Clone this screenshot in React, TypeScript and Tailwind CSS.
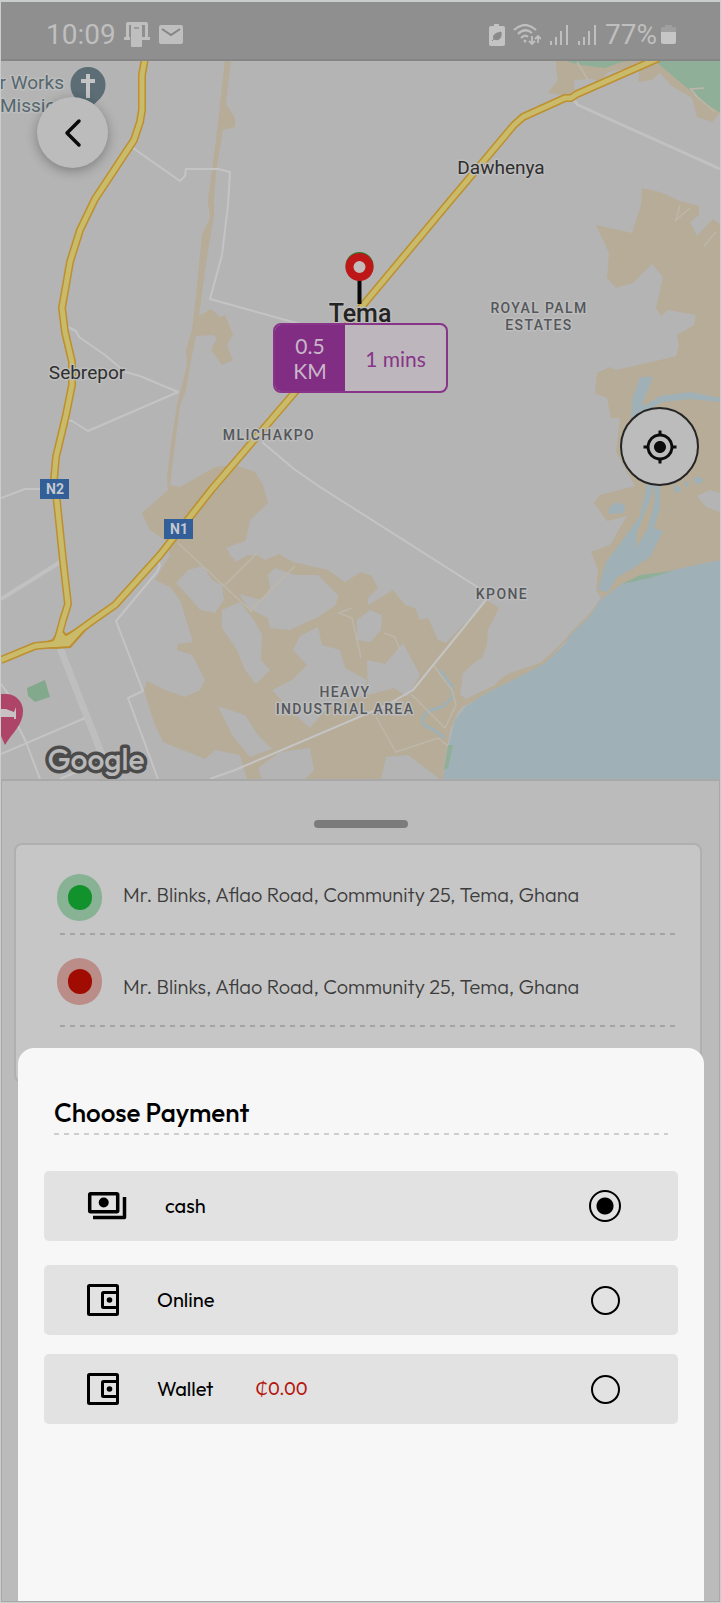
import { useState } from "react";
import type { ReactNode } from "react";
import { MdMyLocation } from "react-icons/md";

const N2 =
  "M145 58 L142 75 V110 L140 122 L134 140 L95 199 L80 230 L70 262 L62 308 L65 332 L72 362 V385 L66 415 L56 457 L54 480 L57 502 L63 560 L68 604 L63 620 L57 642";
const N1 =
  "M659 58 L577 94 L571 98 H565 L523 117 L514 125 L450 201 L364 304 L295 392 L212 489 L160 555 L115 605 L95 619 L66 640 L56 644 L35 646 L1 660";

function MapDrawing() {
  return (
    <svg
      className="block h-full w-full"
      viewBox="1 61 719 718"
      preserveAspectRatio="xMidYMid slice"
      role="img"
      aria-label="Map of Tema"
    >
      <rect x="1" y="61" width="719" height="718" fill="#b4b4b4" />

      <g fill="#b6ac98">
        <path d="M225 60H231L226 104 235 118V127L223 130 216 172 214 200V215L205 270 199 316 211 309 220 317 225 315 233 335 227 345 233 360 222 365 211 350 217 338 213 335 196 336 190 365 186 390 180 405 175 445 170 485 180 487 215 467 235 465 255 472 263 485 268 503 250 520 246 540 228 550 230 556 257 555 265 560 279 554 293 562 328 570 345 582 361 572 372 576 378 588 368 598V605L393 590 405 605 415 608 420 620 428 618 438 640 446 643 487 600 499 608 488 630 487 645 482 658 475 662 463 673 460 695 468 700 458 712 450 730 445 760 443 779H247L240 755 215 750 205 759 163 742 155 725 150 710 144 690 147 681 165 690 185 697 200 690 205 680 192 655 177 650 178 644 193 642 180 600 170 587 155 580 170 555 165 540 150 530 142 513 168 490 167 478 170 450 177 405 187 365 186 350 192 330 196 296 202 235 210 218 208 200 216 140Z" />
        <path d="M642 188L660 192 680 201 699 206V215L690 222 697 236 713 219 721 225V566L640 585 605 597 590 620 570 637 545 664 515 681 490 693 460 708 468 698 495 685 500 679 510 673 540 663 560 645 570 633 590 613 601 598 596 590 598 570 591 552 610 545 627 516 607 521 594 503 600 495 635 486 616 452 620 418 611 418 607 398 595 393 597 373 610 367 616 370 660 360 676 356 679 345 677 335 694 325 696 315 668 310 661 316 656 308 663 277 652 264 633 283 616 288 607 278 609 253 596 225 632 233 641 205Z" />
        <path d="M541 61H555L558 80 548 93 575 97 574 80 592 79 600 82 608 72 640 66 638 82 652 80 660 73 672 86 692 98 697 117 712 122 721 112V61Z" />
      </g>

      <g fill="#b4b4b4">
        <path d="M176 583L188 570 203 566 212 580 222 585 224 600 215 613 200 610 190 598Z" />
        <path d="M222 610L240 602 254 620 262 635 261 660 270 670 256 684 245 670 237 650 222 628Z" />
        <path d="M268 575L275 568 295 575 318 575 338 595 336 605 318 617 290 630 270 628 268 618 248 608 239 594 262 600 270 588Z" />
        <path d="M226 548L238 543 246 545V556L236 562Z" />
        <path d="M293 650L300 636 318 627 322 645 340 650 345 668 367 680 362 696 330 705 310 728 290 710 272 690 292 680 307 665Z" />
        <path d="M367 660L385 664 403 643 420 675 407 697 394 688 368 695Z" />
        <path d="M357 620L370 610 382 615 381 630 370 642 357 640Z" />
        <path d="M218 706L245 715 258 735 272 749 250 757 232 735Z" />
        <path d="M262 779L258 768 280 752 310 748 314 770 305 779Z" />
        <path d="M381 779L386 757 408 755 440 779Z" />
        <path d="M697 496L710 490 720 493V512L706 507Z" />
        <path d="M541 60H556V82L541 90Z" />
      </g>

      <g fill="#8faf99">
        <path d="M562 60L580 65 605 68 622 62 640 60Z" />
        <path d="M654 60L675 78 690 90 700 100 721 113V60Z" />
        <path d="M27 688L45 680 50 697 35 702 28 696Z" fill="#83a98d" />
      </g>

      <g fill="#9fb1b6">
        <path d="M721 560L695 565 665 572 640 576 622 584 600 600 590 616 570 635 565 644 545 663 515 679 490 691 466 706 455 720 450 740 443 779H721Z" />
        <path d="M647 484L640 516 619 545 606 562 598 590 608 592 616 578 632 569 650 557 663 531 654 528 660 508V484H654L655 500 648 528 636 548 637 532 650 500 654 484Z" />
        <path d="M640 377L653 377 643 402 644 406 660 396 690 392 705 395 721 398V402L690 399 662 402 640 415 631 420 632 400Z" />
        <path d="M609 508L616 502 625 505 624 513 608 514Z" />
        <path d="M697 476L704 480 698 485 693 480ZM674 484L682 489 675 494ZM684 481L690 483 686 488Z" />
      </g>
      <path
        d="M440 670L451 685 453 697 442 707 428 711 423 718 424 725 434 730 445 738"
        fill="none"
        stroke="#9fb1b6"
        strokeWidth="3"
      />
      <path d="M622 584L640 575 672 571 650 578Z" fill="#8faf99" />
      <path d="M448 745H453L448 768 444 770Z" fill="#8faf99" />

      <g fill="none" stroke="#bdb7aa" strokeWidth="1.5">
        <path d="M178 543L252 612M225 585L257 553M251 610L295 566M361 658L352 618 339 613 352 608M376 717L396 752 438 738 448 746M434 666L452 690 456 705 445 728 411 694M384 633L395 637 400 650" />
        <path d="M577 62L588 80M690 88L700 100M694 94L715 112M704 88L690 89M680 205L676 220 690 208M704 246L716 232" />
      </g>

      <g fill="none" stroke="#c1c1c1" strokeWidth="3" strokeLinejoin="round">
        <path d="M573 99L578 105 720 169" />
        <path d="M1 599L62 561" strokeWidth="4" />
        <path d="M60 648L104 760 110 779" strokeWidth="7" stroke="#bebebe" />
      </g>
      <g fill="none" stroke="#c4c4c4" strokeWidth="2" strokeLinejoin="round">
        <path d="M133 148L180 181 185 176 186 169H218L230 172 228 205 222 255 210 299 300 324" />
        <path d="M66 326L76 331 79 337 105 355 125 372 140 376 178 392 88 431 72 421 66 420" />
        <path d="M1 498L25 489H41" />
        <path d="M262 442L294 469 320 487 490 595 413 690 385 706 235 770 210 779" />
        <path d="M155 558L160 565 157 572 116 621 143 691 128 698 158 779" />
        <path d="M1 754L85 718M1 684L9 695 16 722 26 742 40 779M60 779L100 762" />
      </g>

      <g fill="none" strokeLinejoin="round">
        <path d={N2} stroke="#bd8f2e" strokeWidth="8" />
        <path d={N1} stroke="#bd8f2e" strokeWidth="8" />
        <path d="M34 647L53 640 60 628 66 635 95 619 70 647 56 648Z" fill="#c9bb69" stroke="#bd8f2e" strokeWidth="2" />
        <path d={N2} stroke="#c9bb69" strokeWidth="5" />
        <path d={N1} stroke="#c9bb69" strokeWidth="5" />
      </g>

      <g>
        <rect x="40" y="479" width="29" height="20" fill="#335f99" />
        <rect x="164" y="519" width="29" height="20" fill="#335f99" />
        <g fill="#c4c9d0" fontFamily="Roboto, sans-serif" fontSize="14" fontWeight="700" textAnchor="middle">
          <text x="55" y="494">N2</text>
          <text x="179" y="534">N1</text>
        </g>
      </g>

      <g>
        <path d="M88 67a17.500 17.500 0 0 1 17.500 17.500c0 13-9 16-17.500 26-8.500-10-17.500-13-17.500-26A17.500 17.500 0 0 1 88 67Z" fill="#5c6d75" />
        <path d="M88 74V98M81 81H95" stroke="#c4c4c4" strokeWidth="4" />
        <path d="M1 694h5a17 17 0 0 1 17 17c0 14-11 22-18 34l-4-9Z" fill="#ae4468" />
        <path d="M1 709h5l8 3 2-5v12h-2v-2H1Z" fill="#c9c0c4" />
      </g>

      <g
        fontFamily="Roboto, sans-serif"
        stroke="#bdbdbd"
        strokeWidth="3"
        paintOrder="stroke"
        strokeLinejoin="round"
      >
        <g fontSize="19" fill="#55686f">
          <text x="64" y="89" textAnchor="end">r Works</text>
          <text x="0" y="112">Missic</text>
        </g>
        <g fontSize="19" fill="#2f2f2f" textAnchor="middle">
          <text x="501" y="174">Dawhenya</text>
          <text x="87" y="379">Sebrepor</text>
        </g>
        <text x="360" y="322" fontSize="25" fontWeight="500" fill="#242424" textAnchor="middle">Tema</text>
        <g className="tracking-widest" fontSize="14" fontWeight="500" fill="#54575b" textAnchor="middle">
          <text x="269" y="440">MLICHAKPO</text>
          <text x="539" y="313">ROYAL PALM</text>
          <text x="539" y="330">ESTATES</text>
          <text x="502" y="599">KPONE</text>
          <text x="345" y="697">HEAVY</text>
          <text x="345" y="714">INDUSTRIAL AREA</text>
        </g>
      </g>
      <text
        x="96"
        y="770"
        fontFamily="Outfit, Lato, sans-serif"
        fontSize="30"
        fontWeight="500"
        fill="#b8b8b8"
        stroke="#4b4b4b"
        strokeWidth="7"
        strokeLinejoin="round"
        paintOrder="stroke"
        textAnchor="middle"
      >
        Google
      </text>

      <g>
        <circle cx="359.500" cy="266" r="14" fill="#2f7a2f" />
        <path d="M359.500 279V304" stroke="#080808" strokeWidth="4" />
        <circle cx="359.500" cy="267" r="10" fill="#c4bcbc" stroke="#bd1717" strokeWidth="8" />
      </g>
    </svg>
  );
}

function Signal() {
  return (
    <svg className="h-5 w-5" viewBox="0 0 20 20" fill="none" stroke="currentColor" strokeWidth="2" aria-hidden="true">
      <path d="M2 16V20M7 12V20M12 6V20M18 0V20" />
    </svg>
  );
}

function StatusBar() {
  return (
    <header className="flex h-[59px] items-center justify-between border-b-2 border-[#858585] bg-[#8f8f8f] pt-2 pr-[44px] pl-[45px] font-[Roboto,sans-serif] text-[28px] leading-8 text-[#bfbfbf]">
      <div className="flex items-center gap-2">
        <span>10:09</span>
        <svg className="h-[25px] w-[27px]" viewBox="0 0 27 25" aria-hidden="true">
          <path d="M4 0H22A2 2 0 0 1 24 2V15H26V18H0V15H2V2A2 2 0 0 1 4 0Z" fill="#bfbfbf" />
          <path d="M5 3H21V15H18V18H6V15H5Z" fill="#8f8f8f" />
          <rect x="7" y="3" width="11" height="22" rx="1" fill="#bfbfbf" />
          <path d="M10 6H15" stroke="#8f8f8f" strokeWidth="1.500" />
        </svg>
        <svg className="h-[19px] w-6" viewBox="0 0 24 19" aria-hidden="true">
          <rect width="24" height="19" rx="2" fill="#bfbfbf" />
          <path d="M3 4L12 10 21 4" fill="none" stroke="#858585" strokeWidth="2" />
        </svg>
      </div>
      <div className="flex items-center gap-2">
        <svg className="h-[22px] w-4" viewBox="0 0 16 22" aria-hidden="true">
          <path d="M5 0H10V2H14A2 2 0 0 1 16 4V20A2 2 0 0 1 14 22H2A2 2 0 0 1 0 20V4A2 2 0 0 1 2 2H5Z" fill="#c3c3c3" />
          <path d="M12 8C13 15 9 17 5 15 3 11 7 9 12 8ZM3 17L7 13" fill="#8a8a8a" stroke="#8a8a8a" />
        </svg>
        <svg className="h-[22px] w-7" viewBox="0 0 28 22" fill="none" stroke="currentColor" strokeWidth="2.200" aria-hidden="true">
          <path d="M1 6Q12-4 23 6M5 10Q12 3 19 9M8 14Q12 10 15 13" />
          <circle cx="12" cy="17" r="1.500" fill="currentColor" stroke="none" />
          <path d="M19 12V20M16 17L19 20 22 17M25 19V12M22 15L25 12 28 15" strokeWidth="1.800" />
        </svg>
        <Signal />
        <Signal />
        <div className="flex items-center gap-1">
          <span>77%</span>
          <svg className="h-[19px] w-[15px]" viewBox="0 0 15 19" aria-hidden="true">
            <path d="M4 0H11V2H14L15 3V7H0V3L1 2H4Z" fill="#9f9f9f" />
            <path d="M0 7H15V17A2 2 0 0 1 13 19H2A2 2 0 0 1 0 17Z" fill="#c6c6c6" />
          </svg>
        </div>
      </div>
    </header>
  );
}

function DashedLine({ className }: { className: string }) {
  return (
    <div
      className={`h-[2px] bg-[repeating-linear-gradient(90deg,currentColor_0,currentColor_5px,transparent_5px,transparent_10px)] ${className}`}
    />
  );
}

function Stop({ ring, dot, children }: { ring: string; dot: string; children: ReactNode }) {
  return (
    <li>
      <div className="flex h-[60px] items-center gap-[21px]">
        <span className={`flex h-[47px] w-[45px] items-center justify-center rounded-full ${ring}`}>
          <span className={`h-[25px] w-6 rounded-full ${dot}`} />
        </span>
        <span className="text-[20px] leading-6 font-light text-[#3c3c3c]">{children}</span>
      </div>
      <DashedLine className="mt-2 ml-[3px] text-[#a3a3a3]" />
    </li>
  );
}

function CashIcon() {
  return (
    <svg className="h-8 w-[42px]" viewBox="0 0 42 32" fill="none" stroke="currentColor" strokeWidth="3.500" strokeLinejoin="round" aria-hidden="true">
      <rect x="2.700" y="3.700" width="28" height="18" rx="1" />
      <path d="M6 27.500H37.500V7" />
      <circle cx="16.700" cy="12.500" r="5" fill="currentColor" stroke="none" />
    </svg>
  );
}

function WalletIcon() {
  return (
    <svg className="h-8 w-8" viewBox="0 0 32 32" fill="none" stroke="currentColor" strokeWidth="3" strokeLinejoin="round" aria-hidden="true">
      <rect x="1.500" y="1.500" width="29" height="29" rx="1" />
      <rect x="15.500" y="8.500" width="15" height="15" rx="1" />
      <circle cx="22.500" cy="16" r="2.800" fill="currentColor" stroke="none" />
    </svg>
  );
}

type Method = "cash" | "online" | "wallet";

function PaymentOption({
  value,
  label,
  icon,
  amount,
  selected,
  onSelect,
}: {
  value: Method;
  label: string;
  icon: ReactNode;
  amount?: string;
  selected: boolean;
  onSelect: (value: Method) => void;
}) {
  return (
    <label className="flex h-[70px] cursor-pointer items-center rounded-[5px] bg-[#e2e2e2] pr-[57px] pl-[43px] text-[20px] leading-6 text-black">
      {icon}
      <span className={value === "cash" ? "ml-9" : "ml-[38px]"}>{label}</span>
      {amount && <span className="ml-[42px] text-[18px] text-[#b5170f]">{amount}</span>}
      <span className="ml-auto flex h-8 w-8 items-center justify-center">
        <input
          type="radio"
          name="payment"
          value={value}
          checked={selected}
          onChange={() => onSelect(value)}
          className="h-[29px] w-[29px] appearance-none rounded-full border-2 border-black checked:h-8 checked:w-8 checked:bg-[radial-gradient(circle,#000_8px,transparent_9px)]"
        />
      </span>
    </label>
  );
}

export default function App() {
  const [method, setMethod] = useState<Method>("cash");

  return (
    <div className="flex min-h-screen flex-col bg-[#c9cdcd] px-px pt-[2px] pb-px font-[Outfit,Lato,sans-serif]">
      <StatusBar />

      <section className="relative h-[718px] overflow-hidden">
        <MapDrawing />
        <button
          type="button"
          aria-label="Back"
          className="absolute top-9 left-9 flex h-[71px] w-[71px] items-center justify-center rounded-full bg-[#bcbcbc] shadow-[0_3px_12px_rgba(0,0,0,0.3)]"
        >
          <svg className="h-8 w-5" viewBox="0 0 20 32" fill="none" stroke="#0a0a0a" strokeWidth="3.500" strokeLinecap="round" strokeLinejoin="round" aria-hidden="true">
            <path d="M16 4L4 16 16 28" />
          </svg>
        </button>
        <div className="absolute top-[262px] left-[272px] flex h-[70px] w-[175px] overflow-hidden rounded-lg border-2 border-[#873489] bg-[#bdb7bd] text-center font-[Lato,sans-serif] text-[21px] leading-[25px]">
          <div className="flex w-[70px] items-center justify-center bg-[#812d83] px-3 text-[#c9b8ca]">0.5 KM</div>
          <div className="flex flex-1 items-center justify-center text-[#873489]">1 mins</div>
        </div>
        <button
          type="button"
          aria-label="My location"
          className="absolute top-[346px] right-[21px] flex h-[79px] w-[79px] items-center justify-center rounded-full border-2 border-[#252525] bg-[#bcbcbc] text-[#0c0c0c]"
        >
          <MdMyLocation className="h-9 w-9" />
        </button>
      </section>

      <main className="flex flex-1 flex-col border border-t-2 border-[#a8a8a8] bg-[#bbbbbb]">
        <div className="mx-auto mt-[39px] h-2 w-[94px] rounded-full bg-[#7b7b7b]" />
        <section className="mt-[15px] mr-[17px] ml-3 h-[240px] rounded-lg border-2 border-[#b0b0b0] bg-[#c6c6c6] pt-5 pr-[25px] pl-[41px]">
          <ul className="flex flex-col gap-[22px]">
            <Stop ring="mt-1 bg-[#88b294]" dot="bg-[#12922d]">
              Mr. Blinks, Aflao Road, Community 25, Tema, Ghana
            </Stop>
            <Stop ring="mb-3 bg-[#bb8d88]" dot="bg-[#a00b02]">
              Mr. Blinks, Aflao Road, Community 25, Tema, Ghana
            </Stop>
          </ul>
        </section>

        <section
          role="dialog"
          aria-labelledby="payment-title"
          className="relative mr-[15px] -mt-[35px] ml-4 flex-1 rounded-t-2xl bg-[#f7f7f7] pt-[49px] pr-[26px] pb-8 pl-[26px]"
        >
          <h1 id="payment-title" className="pl-[10px] text-[26px] leading-8 font-medium text-black">
            Choose Payment
          </h1>
          <DashedLine className="mt-1 mr-[10px] ml-[10px] text-[#cecece]" />
          <div role="radiogroup" aria-labelledby="payment-title" className="mt-9 flex flex-col">
            <PaymentOption
              value="cash"
              label="cash"
              icon={<CashIcon />}
              selected={method === "cash"}
              onSelect={setMethod}
            />
            <div className="mt-6 flex flex-col gap-[19px]">
              <PaymentOption value="online" label="Online" icon={<WalletIcon />} selected={method === "online"} onSelect={setMethod} />
              <PaymentOption value="wallet" label="Wallet" amount="₵0.00" icon={<WalletIcon />} selected={method === "wallet"} onSelect={setMethod} />
            </div>
          </div>
        </section>
      </main>
    </div>
  );
}
